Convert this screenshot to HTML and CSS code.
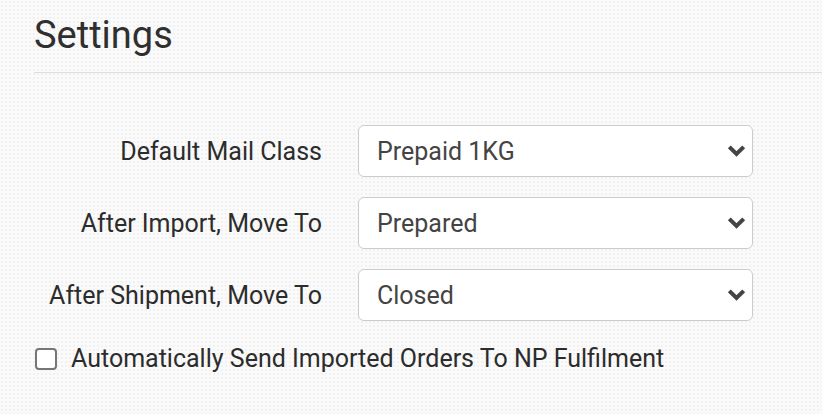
FILE: index.html
```html
<!DOCTYPE html>
<html lang="en">
<head>
  <meta charset="UTF-8" />
  <meta name="viewport" content="width=device-width, initial-scale=1.0"/>
  <title>Settings</title>
  <link rel="stylesheet" href="styles.css">
</head>
<body>

  <div class="settings">
    <h2 class="settings-title">Settings</h2>

    <form class="settings-form">
      <div class="field-row">
        <label for="mailClass">Default Mail Class</label>
        <div class="select-wrap">
          <select id="mailClass" name="mailClass">
            <option>Prepaid 1KG</option>
            <option>Prepaid 3KG</option>
            <option>Prepaid 5KG</option>
          </select>
          <svg class="chevron" viewBox="0 0 19 13" width="19" height="13"><path d="M2.3 2.8 L9.5 10 L16.7 2.8" fill="none" stroke="#444" stroke-width="4"/></svg>
        </div>
      </div>

      <div class="field-row">
        <label for="afterImport">After Import, Move To</label>
        <div class="select-wrap">
          <select id="afterImport" name="afterImport">
            <option>Prepared</option>
            <option>Closed</option>
          </select>
          <svg class="chevron" viewBox="0 0 19 13" width="19" height="13"><path d="M2.3 2.8 L9.5 10 L16.7 2.8" fill="none" stroke="#444" stroke-width="4"/></svg>
        </div>
      </div>

      <div class="field-row">
        <label for="afterShipment">After Shipment, Move To</label>
        <div class="select-wrap">
          <select id="afterShipment" name="afterShipment">
            <option>Closed</option>
            <option>Prepared</option>
          </select>
          <svg class="chevron" viewBox="0 0 19 13" width="19" height="13"><path d="M2.3 2.8 L9.5 10 L16.7 2.8" fill="none" stroke="#444" stroke-width="4"/></svg>
        </div>
      </div>

      <!-- Auto send -->
      <label class="check-row">
        <input type="checkbox" name="autoSend" />
        <span>Automatically Send Imported Orders To NP Fulfilment</span>
      </label>
    </form>
  </div>

</body>
</html>
```

FILE: styles.css
```css
body {
  font-family: Roboto, 'Liberation Sans', sans-serif;
  background-color: #fafafa;
  background-image: radial-gradient(#f1f1f1 1px, transparent 1px);
  background-size: 4px 4px;
  color: #2c2c2c;
  margin: 0;
}

.settings {
  padding: 12px 0 0 34px;
}

.settings-title {
  font-size: 38px;
  font-weight: 400;
  line-height: 46px;
  margin: 0;
  padding-bottom: 14px;
  border-bottom: 1px solid #dedede;
  color: #2f2f2f;
}

.settings-form {
  padding-top: 52px;
}

.field-row {
  display: grid;
  grid-template-columns: 288px 395px;
  column-gap: 36px;
  align-items: center;
  margin-bottom: 20px;
}

.field-row label {
  text-align: right;
  font-size: 25px;
  color: #2c2c2c;
}

.select-wrap {
  position: relative;
}

.select-wrap select {
  appearance: none;
  -webkit-appearance: none;
  width: 100%;
  height: 52px;
  padding: 0 40px 0 18px;
  font-family: inherit;
  font-size: 25px;
  color: #444;
  background: #fff;
  border: 1px solid #ccc;
  border-radius: 6px;
}

.chevron {
  position: absolute;
  right: 7px;
  top: 19px;
  pointer-events: none;
}

/* sits 23px under the last row (margins collapse with the row's 20px) */
.check-row {
  display: flex;
  align-items: center;
  gap: 14px;
  font-size: 25px;
  color: #2c2c2c;
  margin-top: 23px;
}

.check-row input {
  appearance: none;
  -webkit-appearance: none;
  width: 22px;
  height: 22px;
  margin: 0 0 0 1px;
  border: 2px solid #767676;
  border-radius: 4px;
  background: #fff;
}
```
